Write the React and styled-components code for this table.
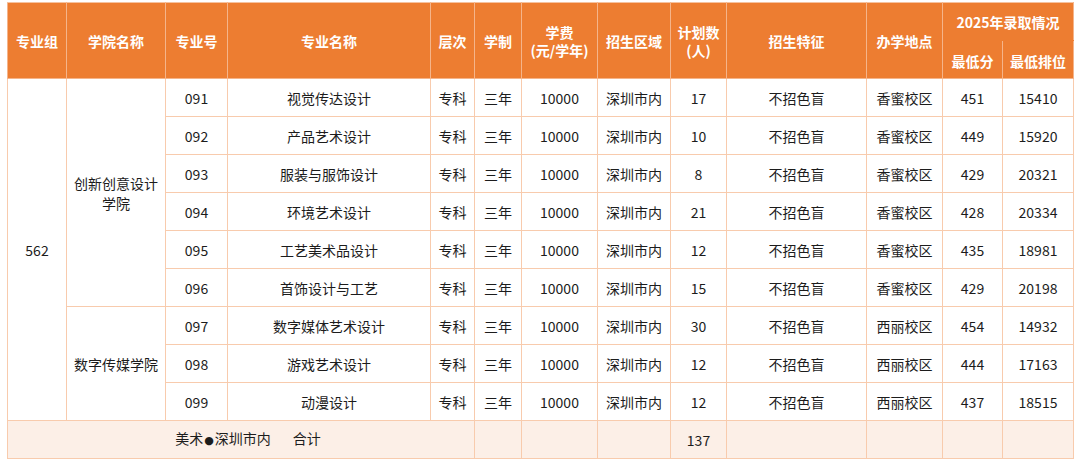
import styled, { createGlobalStyle } from 'styled-components';

const GlobalStyle = createGlobalStyle`
    body {
        margin: 0;
        background: #ffffff;
        font-family: 'Noto Sans CJK SC', 'Noto Sans', sans-serif;
    }
`

const widths = [59, 99, 62, 203, 44, 47, 76, 73, 56, 140, 76, 60, 71];

const majors = [
    ['091', '视觉传达设计', '17', '香蜜校区', '451', '15410'],
    ['092', '产品艺术设计', '10', '香蜜校区', '449', '15920'],
    ['093', '服装与服饰设计', '8', '香蜜校区', '429', '20321'],
    ['094', '环境艺术设计', '21', '香蜜校区', '428', '20334'],
    ['095', '工艺美术品设计', '12', '香蜜校区', '435', '18981'],
    ['096', '首饰设计与工艺', '15', '香蜜校区', '429', '20198'],
    ['097', '数字媒体艺术设计', '30', '西丽校区', '454', '14932'],
    ['098', '游戏艺术设计', '12', '西丽校区', '444', '17163'],
    ['099', '动漫设计', '12', '西丽校区', '437', '18515'],
];

export default function App() {
    return (
        <Page>
            <GlobalStyle />
            <Table>
                <colgroup>
                    {widths.map((w, i) => <col key={i} style={{ width: w }} />)}
                </colgroup>
                <thead>
                    <tr>
                        <Th rowSpan={2}>专业组</Th>
                        <Th rowSpan={2}>学院名称</Th>
                        <Th rowSpan={2}>专业号</Th>
                        <Th rowSpan={2}>专业名称</Th>
                        <Th rowSpan={2}>层次</Th>
                        <Th rowSpan={2}>学制</Th>
                        <Th rowSpan={2}>学费<br />(元/学年)</Th>
                        <Th rowSpan={2}>招生区域</Th>
                        <Th rowSpan={2}>计划数<br />(人)</Th>
                        <Th rowSpan={2}>招生特征</Th>
                        <Th rowSpan={2}>办学地点</Th>
                        <Th colSpan={2} $group>2025年录取情况</Th>
                    </tr>
                    <tr>
                        <Th $sub>最低分</Th>
                        <Th $sub>最低排位</Th>
                    </tr>
                </thead>
                <tbody>
                    {majors.map((m, i) => (
                        <Row key={m[0]}>
                            {i === 0 && <Td rowSpan={9}>562</Td>}
                            {i === 0 && <Td rowSpan={6}>创新创意设计<br />学院</Td>}
                            {i === 6 && <Td rowSpan={3}>数字传媒学院</Td>}
                            <Td>{m[0]}</Td>
                            <Td>{m[1]}</Td>
                            <Td>专科</Td>
                            <Td>三年</Td>
                            <Td>10000</Td>
                            <Td>深圳市内</Td>
                            <Td>{m[2]}</Td>
                            <Td>不招色盲</Td>
                            <Td>{m[3]}</Td>
                            <Td>{m[4]}</Td>
                            <Td>{m[5]}</Td>
                        </Row>
                    ))}
                    <TotalRow>
                        <Td colSpan={5} $label>
                            美术<Dot>●</Dot>深圳市内&nbsp;&nbsp;&nbsp;&nbsp;&nbsp;&nbsp;&nbsp;合计
                        </Td>
                        <Td />
                        <Td />
                        <Td />
                        <Td>137</Td>
                        <Td />
                        <Td />
                        <Td />
                        <Td />
                    </TotalRow>
                </tbody>
            </Table>
        </Page>
    );
}

const Page = styled.div`
    padding: 2px 7px 0 7px;
`

const Table = styled.table`
    width: 1066px;
    table-layout: fixed;
    border-collapse: collapse;
    border: 1px solid #ed7d31;
    font-size: 14px;
    color: #1c1c1c;
`

const Th = styled.th`
    background: #ed7d31;
    color: #ffffff;
    font-weight: 700;
    font-size: 14px;
    line-height: 18px;
    height: ${p => (p.$group || p.$sub ? '38px' : '76px')};
    padding: 0;
    text-align: center;
    vertical-align: ${p => (p.$group ? 'top' : 'middle')};
    padding-top: ${p => (p.$group ? '10px' : p.$sub ? '2px' : '0')};
    border: 1px solid #f5b48a;
    border-top-color: #f6c29f;
    border-bottom-color: ${p => (p.$group ? '#ed7d31' : '#f5b48a')};
    box-sizing: border-box;
`

const Row = styled.tr`
    height: 38px;
    background: #ffffff;
`

const TotalRow = styled.tr`
    height: 38px;
    background: #fcefe7;
`

const Td = styled.td`
    border: 1px solid #f8cbad;
    padding: 0;
    text-align: center;
    vertical-align: middle;
    line-height: 20px;
    padding-left: ${p => (p.$label ? '14px' : '0')};
`

const Dot = styled.span`
    font-family: 'DejaVu Sans', sans-serif;
    font-size: 11px;
    margin: 0 1px;
`
